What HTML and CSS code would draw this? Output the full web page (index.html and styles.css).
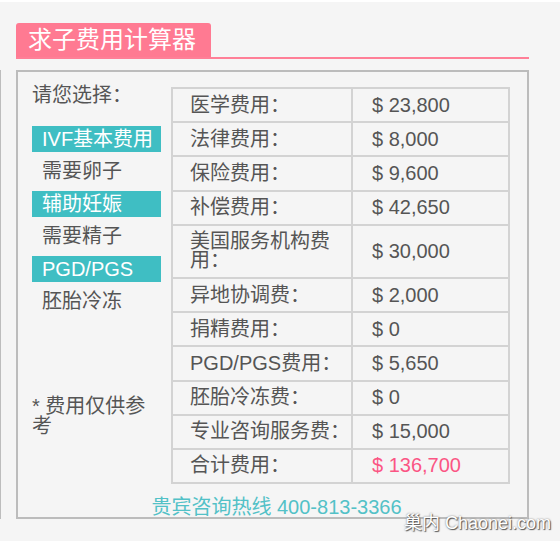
FILE: index.html
```html
<!DOCTYPE html>
<html lang="zh-CN">
<head>
<meta charset="utf-8">
<title>求子费用计算器</title>
<link rel="stylesheet" href="styles.css">
</head>
<body>
<div class="page">
  <div class="head"><div class="tab">求子费用计算器</div></div>
  <div class="main">
    <div class="box">
      <div class="row">
        <div class="side">
          <div class="side-title">请您选择：</div>
          <div class="opt tag">IVF基本费用</div>
          <div class="opt">需要卵子</div>
          <div class="opt tag">辅助妊娠</div>
          <div class="opt">需要精子</div>
          <div class="opt tag">PGD/PGS</div>
          <div class="opt">胚胎冷冻</div>
          <div class="note">* 费用仅供参考</div>
        </div>
        <table class="fees">
          <colgroup><col class="c1"><col class="c2"></colgroup>
          <tr><td class="k">医学费用：</td><td class="v">$ 23,800</td></tr>
          <tr><td class="k">法律费用：</td><td class="v">$ 8,000</td></tr>
          <tr><td class="k">保险费用：</td><td class="v">$ 9,600</td></tr>
          <tr><td class="k">补偿费用：</td><td class="v">$ 42,650</td></tr>
          <tr><td class="k">美国服务机构费用：</td><td class="v">$ 30,000</td></tr>
          <tr><td class="k">异地协调费：</td><td class="v">$ 2,000</td></tr>
          <tr><td class="k">捐精费用：</td><td class="v">$ 0</td></tr>
          <tr><td class="k">PGD/PGS费用：</td><td class="v">$ 5,650</td></tr>
          <tr><td class="k">胚胎冷冻费：</td><td class="v">$ 0</td></tr>
          <tr><td class="k">专业咨询服务费：</td><td class="v">$ 15,000</td></tr>
          <tr><td class="k">合计费用：</td><td class="v total">$ 136,700</td></tr>
        </table>
      </div>
      <div class="hotline">贵宾咨询热线 400-813-3366</div>
    </div>
  </div>
  <div class="watermark">巢内 Chaonei.com</div>
</div>
</body>
</html>
```

FILE: styles.css
```css
html, body {
  margin: 0;
  padding: 0;
}
body {
  background: #f5f5f5;
  font-family: "Liberation Sans", "Noto Sans CJK SC", sans-serif;
  color: #555;
}
.page {
  position: relative;
  width: 560px;
  height: 541px;
  border-top: 2px solid #fff;
  box-sizing: border-box;
}
.head {
  margin-left: 16px;
  width: 513px;
  padding-top: 21px;
  border-bottom: 2px solid #ff7f97;
  display: flex;
}
.tab {
  width: 195px;
  height: 34px;
  box-sizing: border-box;
  padding-left: 12px;
  background: #ff7a92;
  color: #fff;
  font-size: 24px;
  line-height: 34px;
  border-radius: 3px 3px 0 0;
  white-space: nowrap;
}
.main {
  margin-top: 11px;
  border-left: 1px solid #bdbdbd;
  padding-left: 15px;
  width: 513px;
}
.box {
  width: 513px;
  height: 449px;
  box-sizing: border-box;
  border: 2px solid #bcbcbc;
  padding: 15px 17px 0 14px;
}
.row {
  display: flex;
  gap: 10px;
  align-items: flex-start;
}
.side {
  width: 129px;
  flex: none;
  font-size: 20px;
}
.side-title {
  line-height: 16px;
  margin-bottom: 22.7px;
  white-space: nowrap;
}
.opt {
  height: 26px;
  line-height: 26px;
  padding-left: 10px;
  margin-bottom: 6.5px;
  white-space: nowrap;
}
.tag {
  background: #3fbec3;
  color: #fff;
}
.note {
  margin-top: 82px;
  line-height: 20px;
}
.fees {
  border-collapse: separate;
  border-spacing: 0;
  table-layout: fixed;
  width: 339px;
  flex: none;
  border-top: 2px solid #d3d3d3;
  border-left: 2px solid #d3d3d3;
  font-size: 20px;
}
.fees col.c1 {
  width: 180px;
}
.fees col.c2 {
  width: 157px;
}
.fees td {
  border-right: 2px solid #d3d3d3;
  border-bottom: 2px solid #d3d3d3;
  padding: 6.6px 0;
  line-height: 19px;
  vertical-align: middle;
}
.fees td.k {
  padding-left: 17px;
}
.fees td.v {
  padding-left: 19px;
  white-space: nowrap;
}
.fees td.total {
  color: #fb5584;
}
.hotline {
  margin-top: 15px;
  padding-left: 11px;
  text-align: center;
  font-size: 20px;
  line-height: 16px;
  color: #52c1c7;
  white-space: nowrap;
}
.watermark {
  position: absolute;
  right: 9px;
  top: 510px;
  font-size: 18px;
  line-height: 22px;
  color: #fff;
  text-shadow: 1px 1px 1px #555, 0 0 2px #777;
  white-space: nowrap;
}
```
